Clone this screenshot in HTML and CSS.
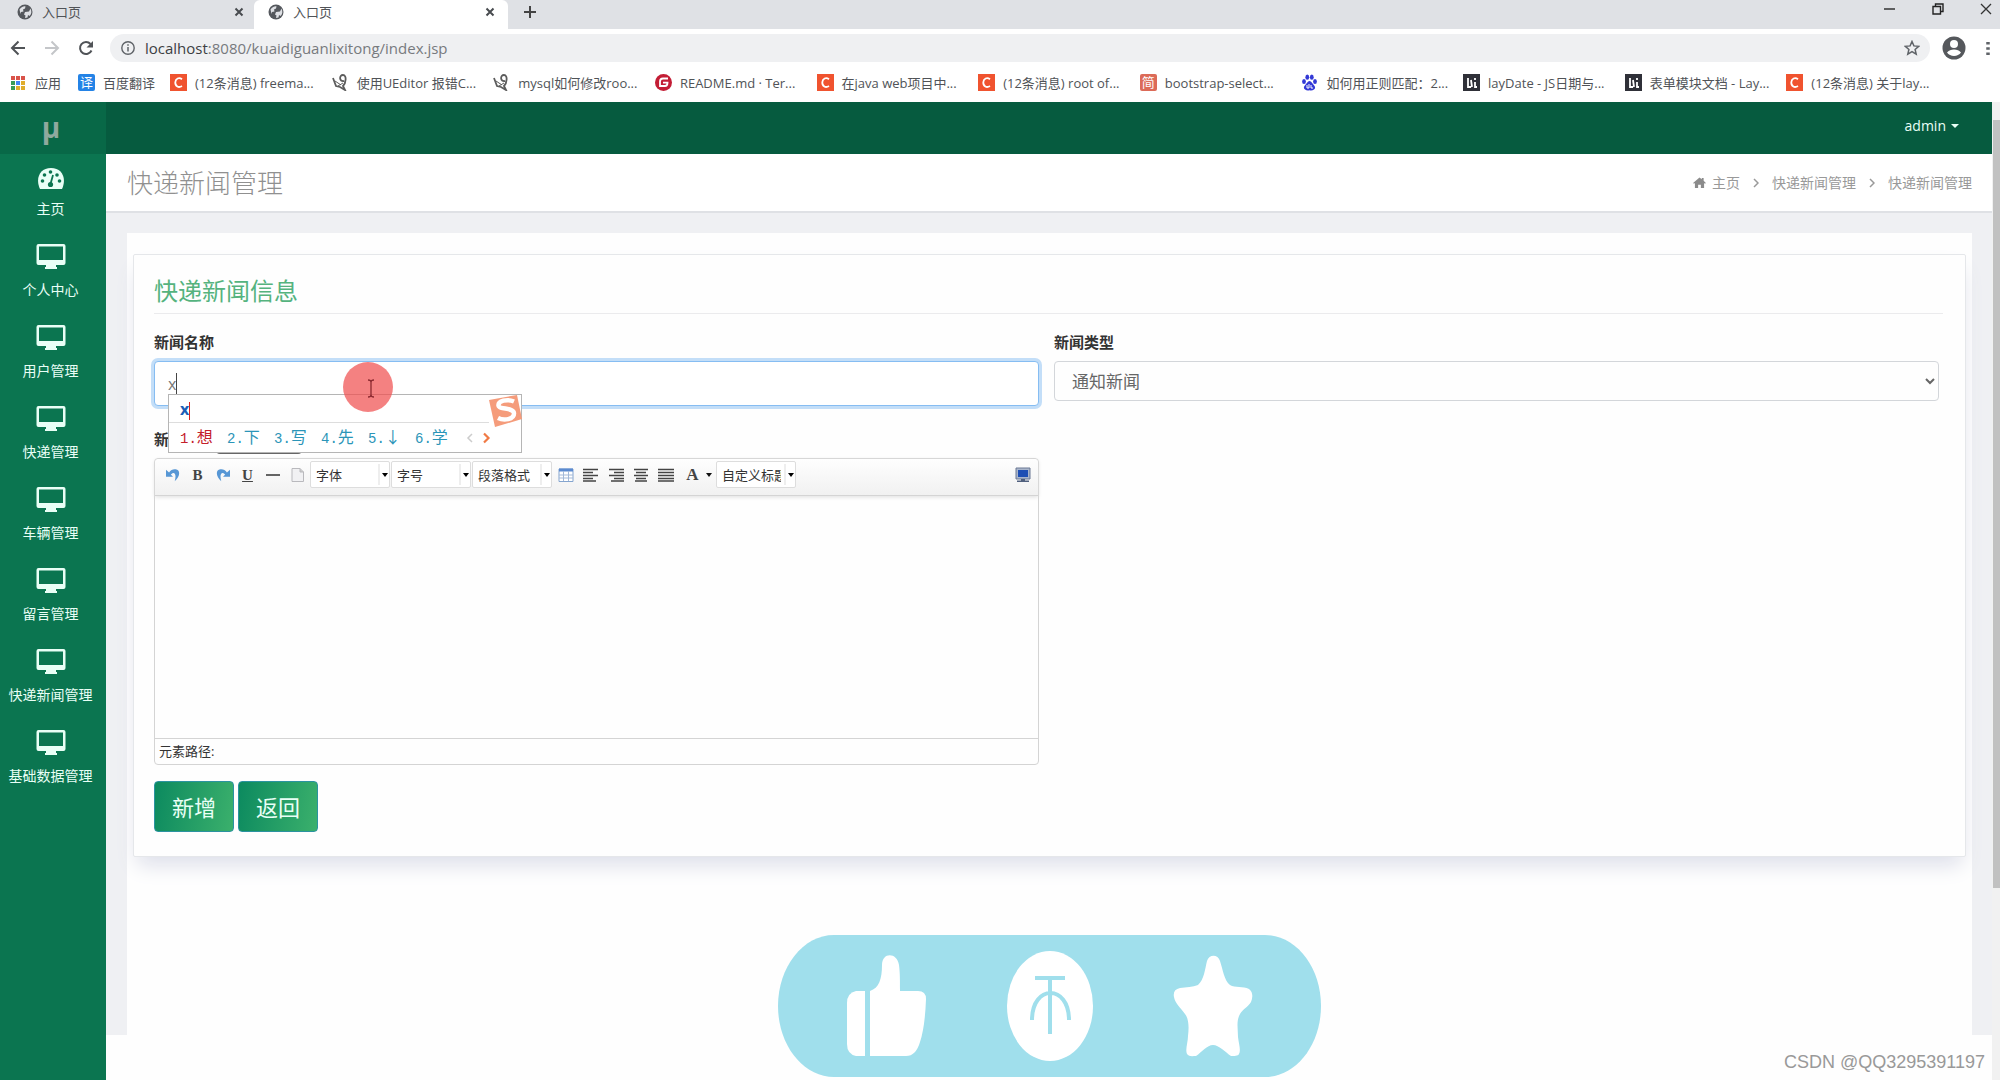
FILE: index.html
```html
<!DOCTYPE html>
<html lang="zh-CN">
<head>
<meta charset="utf-8">
<title>入口页</title>
<link rel="stylesheet" href="styles.css">
</head>
<body>
<svg class="defs" aria-hidden="true">
  <symbol id="globe" viewBox="0 0 16 16"><circle cx="8" cy="8" r="7.5" fill="#55585d"/><path d="M2.5 5.5c2-3 5-3.500 6-3l-.5 2-2 1 .5 2-2.500.5-.5 2zM8 8l4-.5 1.500-3c1.500 3 1 6-1 7.500l-1.500-1-.5 2.500-2.500.5.5-2.500-1.500-1z" fill="#dfe1e5"/></symbol>
  <symbol id="close" viewBox="0 0 10 10"><path d="M1.500 1.500l7 7m0-7l-7 7" stroke="#484b4f" stroke-width="2"/></symbol>
  <symbol id="csdn" viewBox="0 0 17 17"><path fill="#f0532f" d="M0 0h17v17H0z"/><path d="M12 5.200C9 3 5.500 4.500 5.300 8.300c-.2 4.200 3.400 5.900 6.700 3.700" fill="none" stroke="#fff" stroke-width="1.800"/></symbol>
  <symbol id="quill" viewBox="0 0 17 17"><path d="M1 4l3 8 4 1 5 3-2-4c3-3 4-11 0-11-4 0-4 7 1 6" fill="none" stroke="#5c5c5c" stroke-width="1.800"/><path d="M3 7l6 4M6 12l5-3" stroke="#5c5c5c"/></symbol>
  <symbol id="lay" viewBox="0 0 17 17"><path fill="#2f3038" d="M0 0h17v17H0z"/><path d="M5 4v9h3M8 6l1 7M12 8v5h2M12 4v2" fill="none" stroke="#fff" stroke-width="1.800"/></symbol>
  <symbol id="monitor" viewBox="0 0 30 25"><path fill="#e9fff6" fill-rule="evenodd" d="M2.500 0h25Q29.500 0 29.500 2v17q0 2-2 2H20v2h1v2H9v-2h1v-2H2.500q-2 0-2-2V2q0-2 2-2zM3 2.500v13.500h24V2.500z"/></symbol>
  <symbol id="left" viewBox="0 0 16 14"><path d="M0 1.500h15M0 4.500h10M0 7.500h15M0 10.500h10M0 13h13" stroke="#444" stroke-width="1.500"/></symbol>
  <symbol id="right" viewBox="0 0 16 14"><path d="M1 1.500h15M6 4.500h10M1 7.500h15M6 10.500h10M3 13h13" stroke="#444" stroke-width="1.500"/></symbol>
  <symbol id="center" viewBox="0 0 16 14"><path d="M1 1.500h14M3 4.500h10M1 7.500h14M3 10.500h10M2 13h12" stroke="#444" stroke-width="1.500"/></symbol>
  <symbol id="full" viewBox="0 0 16 14"><path d="M0 1.500h16M0 4.500h16M0 7.500h16M0 10.500h16M0 13h16" stroke="#444" stroke-width="1.500"/></symbol>
  <symbol id="undo" viewBox="0 0 16 16"><path d="M0 2v8h8L5.500 7.500C9 3.500 12.500 6 10 15c6-5 7-13 1-13.500C8 1 5.500 2.500 3.500 5z" fill="#5797d5"/></symbol>
</svg>

<header class="browser">
  <div class="tabs">
    <div class="tab"><svg class="i16"><use href="#globe"/></svg><span>入口页</span><button aria-label="关闭标签"><svg class="i10"><use href="#close"/></svg></button></div>
    <div class="tab active"><svg class="i16"><use href="#globe"/></svg><span>入口页</span><button aria-label="关闭标签"><svg class="i10"><use href="#close"/></svg></button></div>
    <button class="plus" aria-label="新标签"><svg class="i12" viewBox="0 0 12 12"><path d="M6 0v12M0 6h12" stroke="#444" stroke-width="2"/></svg></button>
    <div class="winctl">
      <button aria-label="最小化"><svg class="i12" viewBox="0 0 12 12"><path d="M0 6h11" stroke="#333" stroke-width="1.500"/></svg></button>
      <button aria-label="还原"><svg class="i12" viewBox="0 0 12 12"><path d="M1 3.500h7.500V11H1zM3.500 3.500V1H11v7.500H8.500" fill="none" stroke="#222" stroke-width="1.400"/></svg></button>
      <button aria-label="关闭"><svg class="i12" viewBox="0 0 12 12"><path d="M1 1l10 10m0-10L1 11" stroke="#333" stroke-width="1.300"/></svg></button>
    </div>
  </div>
  <div class="toolbar">
    <button class="nav" aria-label="后退"><svg class="i16" viewBox="0 0 16 16"><path d="M15 8H2m6.500-6.500L2 8l6.500 6.500" fill="none" stroke="#505357" stroke-width="2"/></svg></button>
    <button class="nav" aria-label="前进"><svg class="i16" viewBox="0 0 16 16"><path d="M1 8h13M7.500 1.500L14 8l-6.500 6.500" fill="none" stroke="#c4c6c9" stroke-width="2"/></svg></button>
    <button class="nav" aria-label="刷新"><svg class="i16" viewBox="0 0 16 16"><path d="M13.500 10.500A6 6 0 1 1 12.500 4" fill="none" stroke="#505357" stroke-width="2"/><path d="M15 1v6.500H8.500z" fill="#505357"/></svg></button>
    <div class="address">
      <svg class="i14" viewBox="0 0 14 14"><circle cx="7" cy="7" r="6.200" fill="none" stroke="#5f6368" stroke-width="1.400"/><path d="M7 6v4.500M7 3.200v1.600" stroke="#5f6368" stroke-width="1.500"/></svg>
      <span class="url"><b>localhost</b>:8080/kuaidiguanlixitong/index.jsp</span>
      <svg class="i16" viewBox="0 0 16 16"><path d="M8 1.500l1.900 4.400 4.800.4-3.600 3.200 1.100 4.700L8 11.700l-4.200 2.500 1.100-4.700L1.300 6.300l4.800-.4z" fill="none" stroke="#5f6368" stroke-width="1.500"/></svg>
    </div>
    <svg class="avatar" viewBox="0 0 24 24"><circle cx="12" cy="12" r="11.500" fill="#55585c"/><circle cx="12" cy="8" r="4" fill="#fff"/><path d="M5 16.500c3-4 11-4 14 0-3 4.500-11 4.500-14 0z" fill="#fff"/></svg>
    <svg class="dots" viewBox="0 0 4 16"><path d="M0 1h4v3H0zM0 7h4v3H0zM0 13h4v3H0z" fill="#5f6368"/></svg>
  </div>
  <nav class="bookmarks">
    <a class="apps" href="#"><svg class="i14" viewBox="0 0 14 14"><path d="M0 0h4v4H0zM5 0h4v4H5zM10 0h4v4h-4z" fill="#d9534a"/><path d="M0 5h4v4H0z" fill="#3a9b57"/><path d="M5 5h4v4H5z" fill="#4285f4"/><path d="M10 5h4v4h-4zM5 10h4v4H5zM10 10h4v4h-4z" fill="#e0ad2c"/><path d="M0 10h4v4H0z" fill="#3a9b57"/></svg><span>应用</span></a>
    <a class="fanyi" href="#"><i class="badge blue">译</i><span>百度翻译</span></a>
    <div class="marks">
      <a href="#"><svg class="i17"><use href="#csdn"/></svg><span>(12条消息) freema...</span></a>
      <a href="#"><svg class="i17"><use href="#quill"/></svg><span>使用UEditor 报错C...</span></a>
      <a href="#"><svg class="i17"><use href="#quill"/></svg><span>mysql如何修改roo...</span></a>
      <a href="#"><svg class="i17" viewBox="0 0 17 17"><circle cx="8.500" cy="8.500" r="8.500" fill="#c31d35"/><path d="M13 4.500H8q-3 0-3 3v4.500h5q2.500 0 2.500-3.300H8" fill="none" stroke="#fff" stroke-width="1.800"/></svg><span>README.md · Ter...</span></a>
      <a href="#"><svg class="i17"><use href="#csdn"/></svg><span>在java web项目中...</span></a>
      <a href="#"><svg class="i17"><use href="#csdn"/></svg><span>(12条消息) root of...</span></a>
      <a href="#"><i class="badge red">简</i><span>bootstrap-select...</span></a>
      <a href="#"><svg class="i17" viewBox="0 0 17 17"><g fill="#3339d6"><ellipse cx="3" cy="7.500" rx="1.900" ry="2.500"/><ellipse cx="6.300" cy="3.200" rx="1.900" ry="2.600"/><ellipse cx="10.800" cy="3.200" rx="1.900" ry="2.600"/><ellipse cx="14" cy="7.500" rx="1.900" ry="2.500"/><path d="M8.500 7c2 0 2.500 2.500 4.500 4.200 3 3-.5 6-4.500 5-4 1-7.500-2-4.500-5C6 9.500 6.500 7 8.500 7z"/></g><path d="M6 11v3h2v-4M10 11v3h2" fill="none" stroke="#fff"/></svg><span>如何用正则匹配：2...</span></a>
      <a href="#"><svg class="i17"><use href="#lay"/></svg><span>layDate - JS日期与...</span></a>
      <a href="#"><svg class="i17"><use href="#lay"/></svg><span>表单模块文档 - Lay...</span></a>
      <a href="#"><svg class="i17"><use href="#csdn"/></svg><span>(12条消息) 关于lay...</span></a>
    </div>
  </nav>
</header>

<div class="app">
  <aside class="sidebar">
    <div class="logo">µ</div>
    <a class="dash" href="#"><svg class="mon" viewBox="0 0 30 25"><path d="M4 23C-1 12 4 2 15 2s16 10 11 21z" fill="#e9fff6"/><g fill="#0b7550"><circle cx="6.500" cy="15" r="1.800"/><circle cx="8.500" cy="9" r="1.800"/><circle cx="14.500" cy="6" r="1.800"/><circle cx="21" cy="9" r="1.800"/><circle cx="23.500" cy="15" r="1.800"/><circle cx="14.500" cy="18.500" r="2.600"/></g><path d="M14.500 18l2.500-9" stroke="#0b7550" stroke-width="1.800"/></svg><span>主页</span></a>
    <a href="#"><svg class="mon"><use href="#monitor"/></svg><span>个人中心</span></a>
    <a href="#"><svg class="mon"><use href="#monitor"/></svg><span>用户管理</span></a>
    <a href="#"><svg class="mon"><use href="#monitor"/></svg><span>快递管理</span></a>
    <a href="#"><svg class="mon"><use href="#monitor"/></svg><span>车辆管理</span></a>
    <a href="#"><svg class="mon"><use href="#monitor"/></svg><span>留言管理</span></a>
    <a href="#"><svg class="mon"><use href="#monitor"/></svg><span>快递新闻管理</span></a>
    <a href="#"><svg class="mon"><use href="#monitor"/></svg><span>基础数据管理</span></a>
  </aside>

  <main class="main">
    <div class="topbar"><button class="user">admin <i class="caret"></i></button></div>
    <div class="titlebar">
      <h1>快递新闻管理</h1>
      <nav class="crumbs">
        <a href="#"><svg class="home" viewBox="0 0 14 12"><path d="M0 6.500L7 .5l2.500 2V1h2v3L14 6.500l-1 .8-1-.8V12H8.500V8.500h-3V12H2V6.500l-1 .8z" fill="#8b8b8b"/></svg>主页</a>
        <svg class="chev" viewBox="0 0 6 10"><path d="M1 1l4 4-4 4" fill="none" stroke="#999" stroke-width="1.500"/></svg>
        <a href="#">快递新闻管理</a>
        <svg class="chev" viewBox="0 0 6 10"><path d="M1 1l4 4-4 4" fill="none" stroke="#999" stroke-width="1.500"/></svg>
        <span>快递新闻管理</span>
      </nav>
    </div>
    <div class="content">
      <div class="sheet">
        <section class="card">
          <h2>快递新闻信息</h2>
          <form class="form">
            <div class="field">
              <label for="name">新闻名称</label>
              <div class="namebox">
                <input id="name" type="text" value="x">
                <i class="textcaret"></i>
                <div class="tip"></div>
                <div class="ime">
                  <div class="typed">x</div>
                  <ol class="cands">
                    <li class="first"><b>1.</b>想</li><li><b>2.</b>下</li><li><b>3.</b>写</li><li><b>4.</b>先</li><li><b>5.</b>↓</li><li><b>6.</b>学</li>
                    <li class="pager"><svg viewBox="0 0 26 12"><path d="M6 2L2 6l4 4" fill="none" stroke="#ccc" stroke-width="1.500"/><path d="M18 1.500L22.500 6 18 10.500" fill="none" stroke="#f07a45" stroke-width="2.200"/></svg></li>
                  </ol>
                  <svg class="sogou" viewBox="0 0 34 32"><path d="M1 5L29 0l5 24L7 32z" fill="#f59c7b"/><path d="M26 6.500c-7-3-16-.5-15.500 4C11 15 26 12 26 18.500c0 6-10 7.500-16 4.500" fill="none" stroke="#fff" stroke-width="4.500"/></svg>
                </div>
                <svg class="pointer" viewBox="0 0 50 50"><circle cx="25" cy="25" r="25" fill="#f05050" fill-opacity=".72"/><path d="M25 18q3 0 3 2v13q0 2-3 2M31 18q-3 0-3 2v13q0 2 3 2" fill="none" stroke="#8c2a30" stroke-width="1.300"/></svg>
              </div>
            </div>
            <div class="field">
              <label for="type">新闻类型</label>
              <select id="type" class="type"><option>通知新闻</option></select>
            </div>
            <div class="field">
              <label for="body">新</label>
              <div class="editor">
                <div class="tools">
                  <button type="button" aria-label="撤销"><svg class="i14"><use href="#undo"/></svg></button>
                  <button type="button" class="serif">B</button>
                  <button type="button" aria-label="重做"><svg class="i14 flip"><use href="#undo"/></svg></button>
                  <button type="button" class="serif under">U</button>
                  <button type="button" aria-label="分隔线"><svg class="i16" viewBox="0 0 16 16"><path d="M1 8h14" stroke="#333" stroke-width="1.500"/></svg></button>
                  <button type="button" aria-label="清空"><svg class="i16" viewBox="0 0 16 16"><path d="M2 1.500h8l3.500 3.500v9.500H2z" fill="#f1f1f3" stroke="#b9b9bd"/><path d="M10 1.500V5h3.500" fill="#ccc" stroke="#b9b9bd"/></svg></button>
                  <select aria-label="字体"><option>字体</option></select>
                  <select aria-label="字号"><option>字号</option></select>
                  <select aria-label="段落格式"><option>段落格式</option></select>
                  <button type="button" aria-label="表格"><svg class="i16" viewBox="0 0 16 16"><path d="M1 2h14v12.500H1z" fill="#fff" stroke="#85a5cf"/><path d="M1 1.500h14v3H1z" fill="#5b8ad0"/><path d="M1 8h14M1 11h14M5.500 4v10M10.500 4v10" stroke="#a3b9d8"/></svg></button>
                  <button type="button" aria-label="居左"><svg class="al"><use href="#left"/></svg></button>
                  <button type="button" aria-label="居右"><svg class="al"><use href="#right"/></svg></button>
                  <button type="button" aria-label="居中"><svg class="al"><use href="#center"/></svg></button>
                  <button type="button" aria-label="两端"><svg class="al"><use href="#full"/></svg></button>
                  <button type="button" class="serif color">A<i class="caret"></i></button>
                  <select aria-label="自定义标题"><option>自定义标题</option></select>
                  <button type="button" class="screen" aria-label="全屏"><svg class="i16" viewBox="0 0 16 16"><path d="M1 1h14v11H1z" fill="#aab6cc" stroke="#6b7894"/><path d="M3 3h10v7H3z" fill="#1f4fb4"/><path d="M6 12h4v1.500h4V15H2v-1.500h4z" fill="#50607e"/></svg></button>
                </div>
                <textarea id="body"></textarea>
                <div class="status">元素路径:</div>
              </div>
            </div>
          </form>
          <div class="actions"><button>新增</button><button>返回</button></div>
        </section>
      </div>
    </div>

    <svg class="likes" viewBox="0 0 543 142">
      <path d="M56 0H487C518 0 543 32 543 71S518 142 487 142H56C25 142 0 110 0 71S25 0 56 0z" fill="#a0dfec"/>
      <g fill="#fff"><path d="M87 56v65h-9q-9-2-9-12V68q0-10 9-12z"/><path d="M92 56c9-3 12-12 12-26 0-13 15-13 17 0 1 8 1 15 1 26h18q8 0 8 8-1 28-6 43-4 14-14 14H92z"/><ellipse cx="272" cy="71" rx="43" ry="55"/><path d="M429 26C431 19 440 19 442 26C445 35 446 45 452 50C457 53 465 51 471 54C475 57 475 62 473 67C470 72 465 74 462 79C458 86 460 94 460 102C461 110 463 115 461 119C460 121 456 121 453 121C447 117 441 110 435 110C429 110 424 117 418 121C415 121 411 122 409 119C407 115 410 107 410 101C411 93 411 84 407 79C402 72 397 68 396 62C395 57 397 54 402 53C408 52 415 52 420 50C426 45 427 34 429 26z"/></g>
      <path d="M257 43h30M272 43v56M254 85c0-36 37-36 37 0" fill="none" stroke="#a0dfec" stroke-width="4"/>
    </svg>
    <div class="watermark">CSDN @QQ3295391197</div>
  </main>
  <div class="scroll"><i class="thumb"></i></div>
</div>
</body>
</html>
```
FILE: styles.css
```css
* { box-sizing: border-box; }
body {
  margin: 0;
  min-height: 100vh;
  display: flex;
  flex-direction: column;
  background: #fefefe;
  color: #333;
  font: 14px/20px "Open Sans", "Noto Sans CJK SC", sans-serif;
}
button { border: 0; padding: 0; background: none; font: inherit; color: inherit; display: flex; align-items: center; justify-content: center; }
a { color: inherit; text-decoration: none; }
svg { display: block; flex: none; }
i { font-style: normal; }
.defs { width: 0; height: 0; position: absolute; }
.i10 { width: 10px; height: 10px; }
.i12 { width: 12px; height: 12px; }
.i14 { width: 14px; height: 14px; }
.i16 { width: 16px; height: 16px; }
.i17 { width: 17px; height: 17px; }

/* browser frame */
.browser { background: #fff; font-size: 13px; color: #505357; }
.tabs { display: flex; height: 29px; background: #dfe1e5; }
.tab { width: 254px; height: 29px; padding: 0 10px 6px 17px; display: flex; align-items: center; gap: 9px; }
.tab span { flex: 1; }
.tab.active { background: #fff; padding: 0 13px 6px 14px; border-radius: 6px 6px 0 0; }
.plus { width: 44px; height: 24px; }
.winctl { margin-left: auto; display: flex; gap: 36px; height: 18px; padding-right: 8px; }
.toolbar { display: flex; align-items: center; height: 38px; padding: 0 10px; }
.nav { width: 33px; margin-right: 1px; justify-content: flex-start; }
.address { flex: 1; height: 28px; margin: 0 12px 0 -2px; padding: 0 10px 0 11px; border-radius: 14px; background: #eff0f2; display: flex; align-items: center; gap: 10px; }
.url { flex: 1; font-size: 15px; color: #777a7e; }
.url b { font-weight: 400; color: #3c3f43; }
.avatar { width: 24px; height: 24px; }
.dots { width: 4px; height: 14px; margin-left: 20px; }
.bookmarks { display: flex; height: 35px; padding: 0 52px 4px 11px; }
.bookmarks a { display: flex; align-items: center; gap: 8px; white-space: nowrap; font-size: 13px; }
.bookmarks .apps { width: 67px; gap: 10px; }
.bookmarks .fanyi { width: 92px; }
.marks { flex: 1; display: grid; grid-template-columns: repeat(11, 1fr); }
.badge { width: 17px; height: 17px; border-radius: 2px; color: #fff; line-height: 17px; text-align: center; }
.blue { background: #2483e6; }
.red { background: #dc6b58; }

/* application */
.app { flex: 1; display: flex; }
.sidebar { width: 106px; background: #0b7550; color: #e9fff6; }
.sidebar a { display: flex; flex-direction: column; align-items: center; height: 81px; padding: 12px 5px 0 0; gap: 11px; white-space: nowrap; }
.sidebar .dash { height: 78px; gap: 8px; }
.mon { width: 30px; height: 25px; }
.logo { height: 52px; padding-right: 4px; background: #086847; color: #8fa99e; font: bold 28px/50px "Open Sans", sans-serif; text-align: center; }
.main { flex: 1; min-width: 0; position: relative; display: flex; flex-direction: column; }
.topbar { height: 52px; background: #065b3f; display: flex; justify-content: flex-end; padding: 0 33px 4px 0; color: #e9fff6; }
.user { gap: 5px; }
.caret { border: 4px solid transparent; border-top-color: currentColor; border-bottom: 0; }
.titlebar { height: 59px; padding: 0 20px 0 21px; background: #fff; border-bottom: 2px solid #dfe1e5; display: flex; align-items: center; justify-content: space-between; }
h1 { margin: 0; font-size: 26px; line-height: 36px; font-weight: 300; color: #909090; }
.crumbs { display: flex; align-items: center; gap: 13px; color: #999; }
.crumbs a { display: flex; align-items: center; gap: 6px; }
.home { width: 13px; height: 11px; }
.chev { width: 6px; height: 10px; }
.content { flex: 1; display: flex; margin-bottom: 45px; padding: 20px 20px 0 21px; background: #eff0f3; }
.sheet { flex: 1; padding: 21px 6px 0; background: #fefefe; }
.card { padding: 18px 22px 24px 20px; background: #fefefe; border: 1px solid #e5e7ea; border-radius: 2px; box-shadow: 0 12px 20px -4px #dcdee9; }
h2 { margin: 0 0 17px; padding-bottom: 4px; border-bottom: 1px solid #ebebed; font-size: 24px; line-height: 36px; font-weight: 400; color: #55b37e; }
.form { display: grid; grid-template-columns: 1fr 1fr; gap: 22px 15px; padding-right: 4px; }
.field > label { display: block; margin-bottom: 8px; font-size: 15px; line-height: 22px; font-weight: 700; color: #333; }
.namebox { position: relative; }
.namebox input { display: block; width: 100%; height: 45px; padding: 0 13px; border: 1px solid #86bdf2; border-radius: 4px; box-shadow: 0 0 0 3px #c3def8; background: #fff; color: #777; font: inherit; font-size: 16px; outline: 0; }
.type { display: block; width: 100%; height: 40px; padding: 0 13px; border: 1px solid #d3d6da; border-radius: 4px; background: #fefefe; color: #666; font: inherit; font-size: 17px; }

/* input method window and mouse pointer */
.textcaret { position: absolute; left: 22px; top: 12px; width: 1px; height: 22px; background: #444; }
.tip { position: absolute; left: 62px; top: 72px; width: 86px; height: 21px; border-radius: 4px; background: #666; }
.ime { position: absolute; left: 14px; top: 33px; width: 354px; height: 59px; background: #fff; border: 1px solid #b5b5b5; }
.typed { width: 320px; height: 28px; padding-left: 11px; border-bottom: 1px solid #ddd; font-size: 16px; line-height: 28px; font-weight: 700; color: #1b5fb8; }
.typed::after { content: ""; display: inline-block; width: 1px; height: 18px; background: #d22; vertical-align: middle; }
.cands { display: flex; margin: 0; padding: 0 0 0 11px; list-style: none; font-size: 16px; line-height: 28px; color: #2b95b8; }
.cands li { width: 47px; white-space: nowrap; }
.cands b { font: 14px/28px "Liberation Mono", monospace; }
.cands .first { color: #c4202a; }
.cands .pager { width: 30px; padding-left: 4px; display: flex; align-items: center; }
.pager svg { width: 26px; height: 12px; }
.sogou { position: absolute; right: -1px; top: 0; width: 34px; height: 32px; }
.pointer { position: absolute; left: 189px; top: 1px; width: 50px; height: 50px; }

/* rich text editor */
.editor { border: 1px solid #d4d4d4; border-radius: 4px; background: #fefefe; }
.tools { display: flex; align-items: center; height: 37px; padding: 0 3px 5px 5px; border-bottom: 1px solid #d4d4d4; border-radius: 4px 4px 0 0; background: linear-gradient(#fefefe, #f1f1f1); box-shadow: 0 1px 4px #ddd; }
.tools button { width: 25px; height: 26px; }
.tools .serif { font: bold 15px/20px "Liberation Serif", serif; color: #444; }
.tools .under { text-decoration: underline; }
.tools .color { width: 38px; gap: 7px; font-size: 17px; padding-left: 4px; }
.tools .color .caret { border-width: 3px; border-top-width: 4px; border-bottom: 0; color: #111; }
.flip { transform: scaleX(-1); }
.tools select { appearance: none; width: 80px; height: 27px; margin-right: 1px; padding: 0 14px 0 5px; border: 1px solid #ddd; border-radius: 2px; color: #333; font: inherit; font-size: 13px;
  background: #fff url("data:image/svg+xml,%3Csvg xmlns='http://www.w3.org/2000/svg' width='11' height='25'%3E%3Cpath d='M1 2v21' stroke='%23ddd'/%3E%3Cpath d='M4 11h6l-3 4z'/%3E%3C/svg%3E") right center no-repeat; }
.al { width: 16px; height: 14px; }
.tools .screen { margin-left: auto; }
textarea { display: block; width: 100%; height: 243px; border: 0; border-bottom: 1px solid #d4d4d4; resize: none; background: transparent; outline: 0; }
.status { padding: 0 4px; font-size: 13px; line-height: 25px; }
.actions { display: flex; gap: 4px; margin-top: 16px; }
.actions button { width: 80px; height: 51px; border: 1px solid #2b93a0; border-radius: 4px; background: linear-gradient(100deg, #0c8a5f, #3bb06c); color: #e9fff6; font-size: 22px; }

.likes { position: absolute; left: 50%; bottom: 3px; width: 543px; height: 142px; margin-left: -271px; }
.watermark { position: absolute; right: 7px; bottom: 7px; color: #999; font: 18px/22px "Liberation Sans", sans-serif; }
.scroll { width: 8px; padding-top: 18px; background: #f1f1f1; display: flex; }
.thumb { width: 7px; height: 80%; margin-left: auto; background: #c1c1c1; }
```
